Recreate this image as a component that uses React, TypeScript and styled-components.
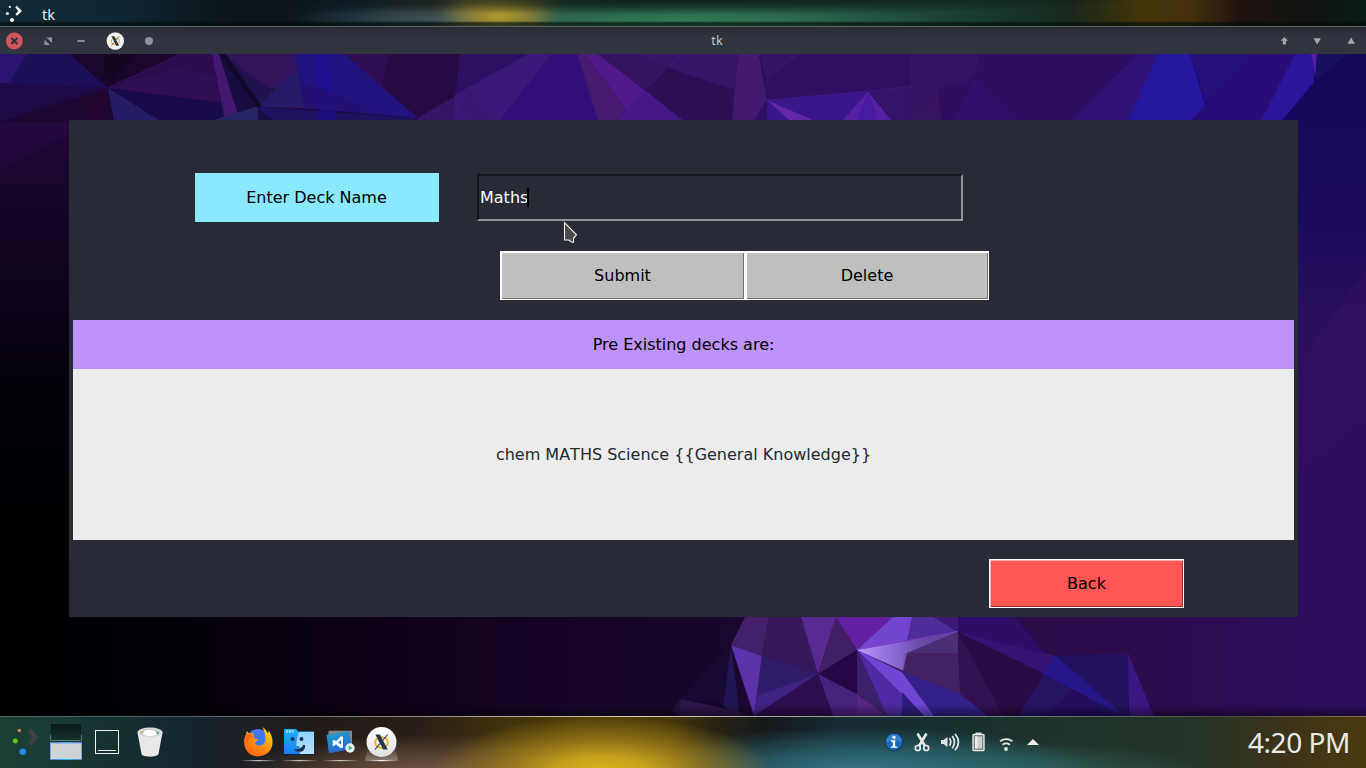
import React from 'react';
import styled, { createGlobalStyle } from 'styled-components';

const GlobalStyle = createGlobalStyle`
  html, body { margin: 0; padding: 0; background: #000; overflow: hidden; }
  * { box-sizing: border-box; }
`;

const Desktop = styled.div`
  width: 1366px;
  height: 768px;
  display: flex;
  flex-direction: column;
  overflow: hidden;
  font-family: 'Noto Sans', sans-serif;
`;

const TopPanel = styled.header`
  flex: 0 0 27px;
  height: 27px;
  display: flex;
  align-items: center;
  gap: 20px;
  padding-left: 5px;
  color: #eceeee;
  font-size: 14.5px;
  border-bottom: 1px solid #59625f;
  background:
    linear-gradient(180deg, rgba(4, 12, 12, 0) 21px, rgba(4, 14, 12, 0.7) 23px, rgba(4, 14, 12, 0.6) 26px),
    radial-gradient(ellipse 460px 16px at 690px -1px, rgba(4, 12, 12, 0.8) 0%, rgba(4, 12, 12, 0.45) 50%, rgba(4, 12, 12, 0) 100%),
    radial-gradient(ellipse 58px 24px at 499px 16px, #b0982a 0%, rgba(160, 140, 46, 0.8) 40%, rgba(140, 120, 46, 0) 100%),
    radial-gradient(ellipse 150px 13px at 440px 18px, rgba(70, 92, 100, 0.8) 0%, rgba(50, 76, 90, 0) 100%),
    radial-gradient(ellipse 260px 18px at 680px 20px, #337a56 0%, rgba(46, 108, 80, 0.5) 60%, rgba(40, 90, 70, 0) 100%),
    linear-gradient(90deg, #122a36 0, #0f2734 110px, #0d181d 210px, #0b1418 270px, #12212a 360px, #2a312c 430px, #5c5a34 465px, #56602f 530px, #28533d 570px, #225540 600px, #28624a 720px, #204d3e 870px, #173a30 990px, #18281c 1070px, #453409 1140px, #44310b 1190px, #201310 1240px, #131411 1300px, #0a1b16 1366px);
`;

const PanelText = styled.span`
  line-height: 24px;
  padding-top: 2px;
`;

const TitleBar = styled.div`
  flex: 0 0 27px;
  display: flex;
  align-items: center;
  padding: 0 5px 0 4px;
  background: linear-gradient(180deg, #272a32 0, #2d3039 5px, #30343f 12px);
`;

const WindowButtons = styled.div`
  display: flex;
  gap: 13.7px;
  svg { display: block; width: 20px; height: 20px; margin-top: 1px; }
`;

const WindowTitle = styled.span`
  flex: 1;
  padding-left: 2px;
  text-align: center;
  color: #c5c8cf;
  font-size: 12.5px;
  line-height: 26px;
  letter-spacing: 0.4px;
`;

const Workspace = styled.main`
  flex: 0 0 662px;
  position: relative;
  display: flex;
  align-items: flex-start;
  padding: 66px 68px 0 69px;
`;

const WallpaperSvg = styled.svg`
  position: absolute;
  inset: 0;
  width: 1366px;
  height: 662px;
`;

const DeckForm = styled.section`
  position: relative;
  width: 1229px;
  height: 497px;
  padding: 53px 4px 0;
  display: flex;
  flex-direction: column;
  background: #282a36;
  font-family: 'DejaVu Sans', sans-serif;
  font-size: 16px;
  color: #000;
`;

const NameRow = styled.div`
  display: flex;
  align-items: center;
  gap: 38px;
  padding-left: 122px;
  height: 49px;
`;

const NameLabel = styled.label`
  width: 244px;
  height: 49px;
  line-height: 49px;
  padding-right: 1px;
  text-align: center;
  background: #8be9fd;
`;

const Entry = styled.div`
  width: 486px;
  height: 47px;
  display: flex;
  align-items: center;
  padding-left: 1px;
  border: 2px solid;
  border-color: #15161c #949599 #949599 #15161c;
  color: #fff;
`;

const Caret = styled.i`
  width: 2px;
  height: 19px;
  margin-left: -1px;
  background: #000;
`;

const ButtonRow = styled.div<{ $top: number; $left: number }>`
  display: flex;
  margin-top: ${(p) => p.$top}px;
  padding-left: ${(p) => p.$left}px;
`;

const TkButton = styled.button<{ $width: number; $face: string; $light: string; $dark: string }>`
  width: ${(p) => p.$width}px;
  height: 49px;
  padding: 0;
  font: inherit;
  color: #000;
  background: ${(p) => p.$face};
  border: 1px solid #fbfbfb;
  box-shadow: inset 1px 1px 0 ${(p) => p.$light}, inset -1px -1px 0 ${(p) => p.$dark};
`;

const DecksHeading = styled.div`
  margin-top: 20px;
  height: 49px;
  line-height: 49px;
  text-align: center;
  background: #bd93f9;
`;

const DecksList = styled.div`
  height: 171px;
  line-height: 171px;
  text-align: center;
  font-kerning: none;
  color: #20292c;
  background: #ececec;
`;

const Pointer = styled.svg`
  position: absolute;
  left: 563px;
  top: 167px;
  width: 16px;
  height: 24px;
`;

const Taskbar = styled.footer`
  flex: 0 0 52px;
  display: flex;
  align-items: stretch;
  padding: 0 16px 0 3px;
  background:
    linear-gradient(90deg, #4d6660 0, #56656a 200px, #777370 330px, #b5afa2 520px, #dcd4b8 640px, #b0b0a8 760px, #7e8f88 900px, #5a6f5e 1100px, #4a4d35 1230px, #857343 1366px) 0 0 / 100% 1px no-repeat,
    radial-gradient(ellipse 170px 56px at 603px 56px, #dab61c 0%, #c5a11d 28%, rgba(168, 132, 28, 0.75) 56%, rgba(110, 84, 28, 0) 100%),
    radial-gradient(ellipse 190px 40px at 430px 58px, #765947 0%, rgba(98, 74, 59, 0.8) 45%, rgba(60, 42, 34, 0) 100%),
    radial-gradient(ellipse 240px 46px at 860px 57px, #34768c 0%, rgba(45, 104, 116, 0.8) 45%, rgba(34, 70, 70, 0) 100%),
    radial-gradient(ellipse 210px 30px at 1000px 56px, rgba(50, 114, 106, 0.8) 0%, rgba(34, 70, 60, 0) 100%),
    linear-gradient(90deg, #1b4034 0, #183a35 60px, #15302f 120px, #142630 185px, #1c2025 240px, #211a18 320px, #2a1f18 420px, #42330a 510px, #4d3c05 590px, #463808 670px, #2b2411 710px, #15191d 765px, #152b31 840px, #17312f 960px, #1f332b 1050px, #263429 1200px, #3a3219 1275px, #4a3a0f 1366px);
`;

const TaskGroup = styled.div<{ $cell: number; $left?: number }>`
  display: flex;
  margin-left: ${(p) => p.$left ?? 0}px;
  svg { display: block; width: ${(p) => p.$cell}px; height: 52px; }
`;

const Clock = styled.time`
  margin-left: auto;
  color: #e9ebea;
  font-size: 28px;
  line-height: 53px;
  letter-spacing: -0.45px;
`;

type Facet = [points: string, fill: string, opacity?: number];

const upperFacets: Facet[] = [
  ['0,54 70,54 108,88 0,84', '#1d0e58'],
  ['0,54 27,54 8,84 0,84', '#2a1370'],
  ['70,54 180,54 108,88', '#1b062c'],
  ['104,54 134,54 112,84 104,76', '#140724'],
  ['0,83 108,88 0,122', '#1e0a46'],
  ['0,122 108,88 114,122', '#1b072f'],
  ['80,97 108,88 104,121 90,121', '#23062f'],
  ['180,54 212,54 221,103 108,88', '#310e53'],
  ['180,54 212,54 214,75 175,68 108,88', '#2d0b4c'],
  ['108,88 221,103 225,121 160,121', '#190b49'],
  ['108,88 160,121 114,121', '#241d66'],
  ['212,54 219,54 258,107 225,121', '#421871'],
  ['219,54 258,107 274,121 240,121', '#190c40'],
  ['225,54 300,54 305,108 260,107', '#22114f'],
  ['222,54 295,54 302,82 270,88', '#321259'],
  ['258,107 298,66 305,108', '#271a66'],
  ['210,121 258,106 258,121', '#262565'],
  ['256,107 415,118 415,121 274,121', '#1d1160'],
  ['219,54 226,54 262,107 257,107', '#100a2c'],
  ['295,54 345,54 418,118 304,108', '#20137f'],
  ['313,54 329,54 336,121 318,121', '#190f9b', 0.55],
  ['300,80 380,113 304,108', '#271070', 0.7],
  ['345,54 460,54 460,98 418,118', '#270943'],
  ['345,54 390,54 382,84 392,97', '#300c55'],
  ['418,118 455,96 470,121 415,121', '#3a1464'],
  ['460,54 530,54 455,96', '#2c1163'],
  ['528,54 552,54 500,121 455,121 455,95', '#3b1979'],
  ['455,95 470,88 500,121 468,121', '#381770', 0.6],
  ['552,54 577,54 598,121 499,121', '#320f7b'],
  ['577,54 585,54 626,109 616,121 598,121', '#47196f'],
  ['585,54 598,54 645,90 626,109', '#50188a'],
  ['626,109 645,90 684,121 616,121', '#451887'],
  ['598,54 682,54 645,90', '#36145f'],
  ['645,90 669,68 735,90 732,121 684,121', '#2f0e56'],
  ['637,54 738,54 735,90 669,68', '#38146a'],
  ['738,54 759,54 767,100 754,121 732,121', '#421a71'],
  ['759,54 912,54 912,88 868,91 767,100', '#2f0f61'],
  ['759,54 800,54 767,82', '#361464'],
  ['754,121 767,100 767,121', '#301064'],
  ['767,100 868,91 842,121 767,121', '#37178a'],
  ['767,100 790,121 815,121', '#6427a9'],
  ['868,91 842,121 892,121', '#5620a5'],
  ['868,91 857,121 878,121', '#491ba0'],
  ['868,91 912,86 912,121 892,121', '#36136c'],
  ['910,54 1137,54 1071,121 910,121', '#2d0e60'],
  ['910,54 980,54 975,77 940,90 910,114', '#351265'],
  ['976,78 952,121 1020,121 990,95', '#321070', 0.7],
  ['910,114 938,92 942,121 910,121', '#3a155f'],
  ['1137,54 1160,54 1130,121 1071,121', '#301378'],
  ['1158,54 1190,54 1210,121 1128,121', '#2418a0'],
  ['1190,54 1255,54 1206,105', '#27107a'],
  ['1206,105 1255,54 1295,54 1262,121 1190,121', '#280d78'],
  ['1295,54 1314,54 1314,82 1282,121 1261,121', '#2c159a'],
  ['1311,54 1317,54 1316,80', '#551ba9'],
  ['1317,54 1366,54 1366,122 1281,122 1315,82', '#15085a'],
  ['1317,54 1348,54 1316,80', '#17105f'],
];

const lowerFacets: Facet[] = [
  ['731,645 681,699 723,703', '#180a33'],
  ['731,645 740,716 723,706', '#211653'],
  ['745,617 769,617 762,656 731,645', '#44206b'],
  ['769,617 801,617 818,674 762,656', '#37195b'],
  ['731,645 762,656 754,716', '#5d31a7'],
  ['762,656 818,674 754,716', '#3f2384'],
  ['762,656 818,674 757,696', '#2a1a61', 0.7],
  ['801,617 836,617 818,674', '#572b92'],
  ['836,617 857,650 818,674', '#421e67'],
  ['836,617 893,617 857,650', '#6420a3'],
  ['818,674 857,650 857,694', '#260645'],
  ['818,674 857,694 857,716 833,716', '#48217d'],
  ['754,716 818,674 833,716', '#2f0d4f'],
  ['857,694 887,716 857,716', '#562683'],
  ['893,617 934,617 958,632 857,650', '#4c2d99'],
  ['893,617 912,617 907,640 857,650', '#7345cf'],
  ['934,617 958,617 958,632', '#3c1976'],
  ['857,650 958,632 907,653 904,670', '#62479f'],
  ['907,653 958,632 958,653', '#4a2f75'],
  ['904,653 958,653 961,694 902,672', '#442162'],
  ['902,672 961,694 988,716 934,716', '#33208a'],
  ['857,650 902,672 934,716 924,716', '#7046d2'],
  ['857,650 924,716 887,716', '#4e2ba5'],
  ['857,650 887,716 857,694', '#3b206a'],
  ['902,692 924,716 902,716', '#2d1d7b'],
  ['958,632 1004,716 988,716 960,694', '#321052'],
  ['958,617 1015,617 1046,655 958,632', '#2d0d65'],
  ['958,632 1056,656 1088,681 1042,673', '#351475'],
  ['958,632 1042,673 1018,716 1004,716', '#2a0b47'],
  ['1056,656 1128,653 1129,716 1100,716', '#231160'],
  ['1056,656 1018,716 1048,716 1072,689', '#261363'],
  ['1056,656 1042,673 1072,689 1124,716', '#25178a'],
  ['1072,689 1110,716 1048,716', '#240e5c'],
  ['1128,653 1154,716 1129,716', '#3c1781'],
  ['681,699 740,712 748,716 679,716', '#2d164b'],
  ['671,710 681,699 679,716', '#241039'],
];

const Wallpaper = () => (
  <WallpaperSvg viewBox="0 54 1366 662" aria-hidden="true">
    <defs>
      <linearGradient id="leftSide" x1="0" y1="0" x2="0" y2="1">
        <stop offset="0" stopColor="#270c4c" />
        <stop offset="0.14" stopColor="#1e0836" />
        <stop offset="0.4" stopColor="#0e041c" />
        <stop offset="0.62" stopColor="#020106" />
        <stop offset="1" stopColor="#000001" />
      </linearGradient>
      <linearGradient id="rightSide" x1="0" y1="0" x2="0" y2="1">
        <stop offset="0" stopColor="#15085a" />
        <stop offset="0.3" stopColor="#1b0a5c" />
        <stop offset="0.5" stopColor="#2b0f60" />
        <stop offset="0.7" stopColor="#300d5e" />
        <stop offset="1" stopColor="#2c0d5a" />
      </linearGradient>
      <linearGradient id="floor" x1="0" y1="0" x2="1" y2="0">
        <stop offset="0" stopColor="#000001" />
        <stop offset="0.15" stopColor="#050109" />
        <stop offset="0.3" stopColor="#0f0118" />
        <stop offset="0.42" stopColor="#17052a" />
        <stop offset="0.52" stopColor="#17072b" />
        <stop offset="0.62" stopColor="#2b0d4a" />
        <stop offset="0.8" stopColor="#2b0b49" />
        <stop offset="1" stopColor="#2c0e5f" />
      </linearGradient>
      <linearGradient id="panelShadow" x1="0" y1="0" x2="0" y2="1">
        <stop offset="0" stopColor="#000" stopOpacity="0" />
        <stop offset="1" stopColor="#000" stopOpacity="0.4" />
      </linearGradient>
      <linearGradient id="glint" gradientUnits="userSpaceOnUse" x1="857" y1="650" x2="945" y2="640">
        <stop offset="0" stopColor="#bd9bff" />
        <stop offset="0.5" stopColor="#8f6fe0" stopOpacity="0.7" />
        <stop offset="1" stopColor="#5d3c99" stopOpacity="0" />
      </linearGradient>
    </defs>
    <rect x="0" y="54" width="700" height="563" fill="url(#leftSide)" />
    <rect x="700" y="54" width="666" height="563" fill="url(#rightSide)" />
    <polygon points="0,122 69,122 69,134 0,170" fill="#240a43" opacity="0.6" />
    <polygon points="1298,365 1366,270 1366,420 1298,470" fill="#3b1264" opacity="0.35" />
    <rect x="0" y="616" width="1366" height="100" fill="url(#floor)" />
    {[...upperFacets, ...lowerFacets].map(([points, fill, opacity]) => (
      <polygon key={points} points={points} fill={fill} opacity={opacity ?? 1} />
    ))}
    <polygon points="857,650 958,632 907,653 903,671" fill="url(#glint)" />
    <path d="M857 649.5 958 631.5" stroke="#9240d6" strokeWidth="0.8" />
    <path d="M767 100 868 91 912 86M626 109 682 54M108 88 180 54" stroke="#6a25a8" strokeWidth="0.6" opacity="0.5" fill="none" />
    <rect x="0" y="704" width="1366" height="12" fill="url(#panelShadow)" />
  </WallpaperSvg>
);

const XMark = ({ cx, cy, s }: { cx: number; cy: number; s: number }) => (
  <g transform={`translate(${cx} ${cy}) scale(${s})`} fill="none">
    <ellipse cx="0" cy="0.5" rx="6.4" ry="5.4" stroke="#f7a711" strokeWidth="1.7" />
    <path d="M-6.200-7.500h4.600L6.200 7.500H1.600z" fill="#263746" />
    <path d="M6.200-7.500-6.500 7.500" stroke="#263746" strokeWidth="1.1" />
  </g>
);

const TopLauncher = () => (
  <svg width="17" height="20" viewBox="5 3 17 20" fill="#eef1f1">
    <circle cx="9.9" cy="6.9" r="1.1" />
    <circle cx="7.4" cy="13.5" r="1.5" />
    <circle cx="12" cy="20" r="2.1" />
    <path d="M15.2 7.2 16.8 5.8 22 11 17 15.8 15.4 14.2 18.2 11z" />
  </svg>
);

const Underline = ({ active }: { active?: boolean }) => (
  <g>
    {active && <path d="M7 30h27l3 14H4z" fill="url(#activeGlow)" />}
    <rect x="2" y="44" width="37" height="1.2" fill="url(#underlineFade)" opacity={active ? 1 : 0.75} />
  </g>
);

const Firefox = () => (
  <svg viewBox="0 0 41 52">
    <defs>
      <linearGradient id="underlineFade"><stop offset="0" stopColor="#fff" stopOpacity="0" /><stop offset=".5" stopColor="#fff" /><stop offset="1" stopColor="#fff" stopOpacity="0" /></linearGradient>
      <linearGradient id="activeGlow" x1="0" y1="0" x2="0" y2="1"><stop offset="0" stopColor="#fff" stopOpacity="0" /><stop offset="1" stopColor="#fff" stopOpacity=".28" /></linearGradient>
      <linearGradient id="fox" x1="0" y1="1" x2=".7" y2="0"><stop offset="0" stopColor="#ff5a10" /><stop offset=".5" stopColor="#ff8a0a" /><stop offset="1" stopColor="#ffd20a" /></linearGradient>
    </defs>
    <Underline />
    <circle cx="20" cy="24.5" r="11.5" fill="#4277f2" />
    <path d="M24.500 11c3 2 4 4 5.500 6.500.6-1 .6-2 .4-3.500 6 8 5.100 17.500.1 22.200-6.500 6.200-18 5.200-22.300-2.200C5.300 28 5.500 22 8.100 18.500c0-1.600.2-2.600 1-3.500.8 1.500 1.600 2.200 3 2.500 1.600-.4 2.800-.2 4.200.3-.8 1.800-1.300 2.800-.3 4.500 1 .9 3 .6 4.300 1-.4 1.600-3.300 2.200-3.200 4.200 1.800 2.600 6.200 2.700 8.500.4 3.500-3.600 1.700-10.800-1.100-16.900z" fill="url(#fox)" />
    <path d="M7.500 19c-1 5 1 9 4 10.500-2-4-1-8 4-8l-3-4z" fill="#f76b13" />
  </svg>
);

const FileManager = () => (
  <svg viewBox="0 0 41 52">
    <defs>
      <linearGradient id="folder" x1="0" y1="0" x2="0" y2="1"><stop offset="0" stopColor="#19b4fb" /><stop offset="1" stopColor="#1a7df0" /></linearGradient>
      <linearGradient id="folderFace" x1="0" y1="0" x2="0" y2="1"><stop offset="0" stopColor="#8fd2fd" /><stop offset="1" stopColor="#b9e1ff" /></linearGradient>
    </defs>
    <Underline />
    <path d="M5 37.500h30v1.500H5z" fill="#0c2236" />
    <path d="M5 13h12l2 2.500h16v22.500H5z" fill="url(#folder)" />
    <path d="M20 16h15v22H21l-.7-8h-3c.2-5 .8-10 2.700-14z" fill="url(#folderFace)" />
    <path d="M7 15.500h8" stroke="#d9f4ff" strokeWidth="2" strokeDasharray="1.700 1.200" />
    <circle cx="13.5" cy="23" r="2" fill="#153450" /><circle cx="22.500" cy="23" r="2" fill="#153450" />
    <path d="M15 33.500c3.500.2 7.500-1.300 9.500-4.800l1.500.2c.6 4.400-2.200 6.900-5.200 6.900-2.500 0-4.300-.8-5.800-2.300z" fill="#17324a" />
  </svg>
);

const CodeRunner = () => (
  <svg viewBox="0 0 41 52">
    <defs><linearGradient id="code" x1="0" y1="0" x2=".4" y2="1"><stop offset="0" stopColor="#22a3c5" /><stop offset="1" stopColor="#2767cf" /></linearGradient></defs>
    <Underline />
    <rect x="8.5" y="14.7" width="23.500" height="19" fill="#828585" />
    <path d="M6.500 19 29 15 32 33 9 37.300z" fill="url(#code)" />
    <path d="M23 20.500v11l-2.500.8-4.500-4-2.200 2-1.100-.5v-5.400l1-.6 2.500 1.500 4.300-4.800zM21 24l-3 2.600 3 2z" fill="#f3fbff" fillRule="evenodd" />
    <circle cx="30" cy="32" r="4.700" fill="#e9f0ef" />
    <path d="M28.700 29.700v4.600l3.800-2.300z" fill="#26b37b" />
  </svg>
);

const XApp = () => (
  <svg viewBox="0 0 41 52">
    <defs><linearGradient id="disc" x1="0" y1="0" x2="0" y2="1"><stop offset="0" stopColor="#fff" /><stop offset="1" stopColor="#dedede" /></linearGradient></defs>
    <Underline active />
    <circle cx="20.500" cy="26" r="15" fill="url(#disc)" />
    <XMark cx={20.5} cy={26} s={1} />
  </svg>
);

const Launcher = () => (
  <svg viewBox="3 716 42 52">
    <circle cx="19.300" cy="730.500" r="1.700" fill="#ee7c5c" />
    <circle cx="15.300" cy="741" r="2.500" fill="#5dc40b" />
    <circle cx="22.700" cy="751.700" r="3.300" fill="#2189f3" />
    <path d="M28 731.500 31 728.500 38.500 737 31.500 745.500 28 742 32.500 737z" fill="#3c4043" />
  </svg>
);

const Pager = () => (
  <svg viewBox="45 716 42 52">
    <defs><linearGradient id="desk" x1="0" y1="0" x2="0" y2="1"><stop offset="0" stopColor="#091819" /><stop offset="1" stopColor="#19342f" /></linearGradient></defs>
    <rect x="51" y="724" width="30" height="17" fill="url(#desk)" />
    <path d="M50.500 735v5.500h31V735" fill="none" stroke="#5f7774" strokeWidth="1" />
    <rect x="50.500" y="743" width="31" height="16.500" fill="#ced3d5" stroke="#8c9cec" />
    <path d="M50 742.500h32M50 759.500h32" stroke="#5d8bd6" />
    <path d="M60 742.500h12M58 759.500h16" stroke="#30b3f2" />
  </svg>
);

const ShowDesktop = () => (
  <svg viewBox="87 716 42 52" fill="none" stroke="#eef1f0">
    <rect x="95.500" y="730.500" width="23" height="23" />
    <path d="M98 750.500h18" />
  </svg>
);

const Trash = () => (
  <svg viewBox="129 716 42 52">
    <path d="M137.500 732.500 141.500 754c.5 3.500 16 3.500 17 0l4-21.500z" fill="#e9e9e9" />
    <ellipse cx="150" cy="732.500" rx="12.500" ry="5" fill="#dddddf" />
    <ellipse cx="150" cy="732.700" rx="10" ry="3.600" fill="#bbbcb8" />
    <path d="M142 734c1-3 3-4 7-4.300 5 0 8 2 9 4.300-4 2.800-12 2.800-16 0z" fill="#fff" />
    <path d="M141.500 732.500l2.500-1.800-.8 4z" fill="#f0cd4f" /><path d="M156.500 731.500l2.500 1.300-2 2.200z" fill="#2cae9c" />
  </svg>
);

const tray = [
  <svg key="info" viewBox="880 716 28 52">
    <circle cx="894" cy="742" r="9.300" fill="#10375e" /><circle cx="894" cy="742" r="8.300" fill="#1769bd" />
    <path d="M886 742a8 8 0 0 1 16 0c-4-1.500-11-1-16 0z" fill="#347fcb" />
    <circle cx="894" cy="737.300" r="1.600" fill="#fff" />
    <path d="M891 740.300h4.200v6.200h2v1.300h-6.400v-1.300h2v-4.800H891z" fill="#fff" />
  </svg>,
  <svg key="cut" viewBox="908 716 28 52" fill="none" stroke="#e8eaea">
    <path d="M917.500 733.500 925 746M926.500 733.500 919 746" strokeWidth="2.600" />
    <circle cx="917.800" cy="748" r="2.500" strokeWidth="1.700" /><circle cx="926.200" cy="748" r="2.500" strokeWidth="1.700" />
  </svg>,
  <svg key="sound" viewBox="936 716 28 52" fill="none" stroke="#e8eaea" strokeWidth="1.700">
    <path d="M941 740h2.500l4-3v10l-4-3H941z" fill="#e0e3e3" stroke="none" />
    <path d="M949.500 738.300q2.500 3.700 0 7.500M952.300 736q4.400 6 0 12.200M955 733.700q7 8.300 0 16.600" />
  </svg>,
  <svg key="battery" viewBox="964 716 28 52">
    <path d="M975.500 732.500h6v2h-6z" fill="#d9dbda" />
    <rect x="973" y="734.300" width="11" height="16.400" rx="1" fill="#7c8582" stroke="#eff0ef" strokeWidth="1.300" />
    <rect x="975" y="736.500" width="7" height="12" fill="#cdd0ce" /><rect x="975" y="736.500" width="2.500" height="12" fill="#eceeed" />
  </svg>,
  <svg key="wifi" viewBox="992 716 28 52" fill="none" stroke="#e5e8e6" strokeWidth="1.700">
    <path d="M997 738q9-6.500 18.500 0" stroke="#18302f" strokeWidth="2" />
    <path d="M1000 741.300q6-4.300 12.500 0M1002.500 744.700q3.700-2.600 7.500 0" /><circle cx="1006" cy="749" r="1.900" fill="#e5e8e6" stroke="none" />
  </svg>,
  <svg key="more" viewBox="1020 716 28 52"><path d="M1027 745h12l-6-6z" fill="#eff1ef" /></svg>,
];

const App: React.FC = () => (
  <>
    <GlobalStyle />
    <Desktop>
      <TopPanel>
        <TopLauncher />
        <PanelText>tk</PanelText>
      </TopPanel>
      <TitleBar>
        <WindowButtons>
          <svg viewBox="0 0 20 20"><circle cx="10.300" cy="10" r="8.500" fill="#cf575f" /><path d="m7.300 7 6 6m0-6-6 6" stroke="#32303b" strokeWidth="2" /></svg>
          <svg viewBox="0 0 20 20" fill="#8e919b"><path d="M8.500 6.500H14V12zM6.500 8.500V14H12z" /></svg>
          <svg viewBox="0 0 20 20"><path d="M6.300 9h7.500v2H6.300z" fill="#858892" /></svg>
          <svg viewBox="0 0 20 20"><circle cx="10.300" cy="10" r="8.700" fill="#f2f2f2" /><XMark cx={10.3} cy={10} s={0.62} /></svg>
          <svg viewBox="0 0 20 20"><circle cx="10" cy="10" r="4" fill="#8e919b" /></svg>
        </WindowButtons>
        <WindowTitle>tk</WindowTitle>
        <WindowButtons>
          <svg viewBox="0 0 20 20"><path d="M10.300 6 14 9.800h-2V13.500H8.800V9.800H6.800z" fill="#a4a6ad" /></svg>
          <svg viewBox="0 0 20 20"><path d="M6.500 7.300h7.400L10.200 13.500z" fill="#a4a6ad" /></svg>
          <svg viewBox="0 0 20 20"><path d="M6.500 12.800h7.400L10.200 6.500z" fill="#a4a6ad" /></svg>
        </WindowButtons>
      </TitleBar>
      <Workspace>
        <Wallpaper />
        <DeckForm>
          <NameRow>
            <NameLabel>Enter Deck Name</NameLabel>
            <Entry>Maths<Caret /></Entry>
          </NameRow>
          <ButtonRow $top={29} $left={427}>
            <TkButton $width={245} $face="#bfbfbf" $light="#fff" $dark="#737373">Submit</TkButton>
            <TkButton $width={244} $face="#bfbfbf" $light="#fff" $dark="#737373">Delete</TkButton>
          </ButtonRow>
          <DecksHeading>Pre Existing decks are:</DecksHeading>
          <DecksList>chem MATHS Science {'{{General Knowledge}}'}</DecksList>
          <ButtonRow $top={19} $left={916}>
            <TkButton $width={195} $face="#ff5555" $light="#ffb3b3" $dark="#993333">Back</TkButton>
          </ButtonRow>
        </DeckForm>
        <Pointer viewBox="563 221 16 24">
          <path d="M564.500 222.500v17.500h4.300l3.200 2.300h1.500v-4l3-3.500z" fill="#4b4b49" stroke="#f4f4f4" strokeWidth="1.100" />
        </Pointer>
      </Workspace>
      <Taskbar>
        <TaskGroup $cell={42}>
          <Launcher />
          <Pager />
          <ShowDesktop />
          <Trash />
        </TaskGroup>
        <TaskGroup $cell={41} $left={67}>
          <Firefox />
          <FileManager />
          <CodeRunner />
          <XApp />
        </TaskGroup>
        <TaskGroup $cell={28} $left={478}>{tray}</TaskGroup>
        <Clock>4:20 PM</Clock>
      </Taskbar>
    </Desktop>
  </>
);

export default App;
